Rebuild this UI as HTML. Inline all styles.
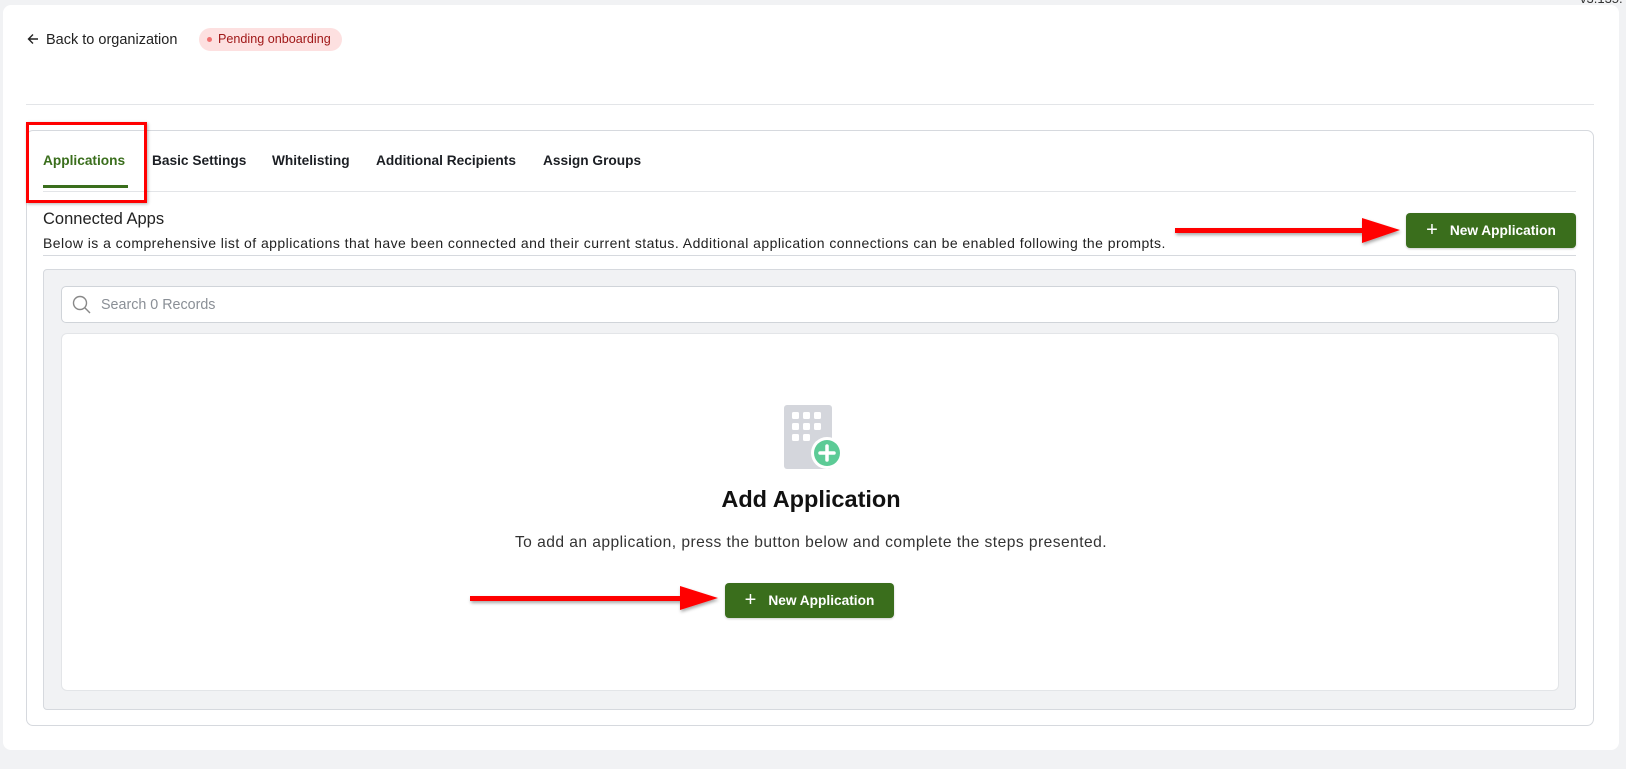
<!DOCTYPE html>
<html><head><meta charset="utf-8"><style>
*{box-sizing:border-box;margin:0;padding:0}
body{width:1626px;height:769px;background:#f1f2f4;font-family:"Liberation Sans",sans-serif;color:#1f2328;position:relative;overflow:hidden}
.abs{position:absolute}
.card{left:3px;top:5px;width:1616px;height:745px;background:#fff;border-radius:8px}
.inner{left:26px;top:130px;width:1568px;height:596px;border:1px solid #d6d9de;border-radius:7px;background:#fff}
.tab{top:153px;font-size:13.7px;font-weight:bold;color:#1c1f24}
.btn{background:#3a6e1c;color:#fff;border-radius:4px;font-size:13.7px;font-weight:bold;display:flex;align-items:center;justify-content:center;gap:12px;box-shadow:0 1px 2px rgba(0,0,0,.2)}
.btn span.p{font-size:20px;font-weight:normal;line-height:1;margin-top:-2px}
</style></head><body>
<div class="abs" style="left:1580px;top:-9px;font-size:13px;color:#333">v3.135.</div>
<div class="abs card"></div>
<svg class="abs" style="left:27px;top:33px" width="12" height="12" viewBox="0 0 12 12"><path d="M11 6H1.5M6 1.5L1.5 6 6 10.5" fill="none" stroke="#222" stroke-width="1.4"/></svg>
<div class="abs" style="left:46px;top:31px;font-size:14.5px;color:#222;line-height:18px">Back to organization</div>
<div class="abs" style="left:199px;top:28px;width:143px;height:23px;background:#fde0e0;border-radius:12px;font-size:12.6px;color:#a01818;line-height:23px;padding-left:19px">Pending onboarding<span class="abs" style="left:8px;top:9px;width:5px;height:5px;border-radius:50%;background:#f07070"></span></div>
<div class="abs" style="left:26px;top:104px;width:1568px;height:1px;background:#e3e5e8"></div>
<div class="abs inner"></div>
<div class="abs tab" style="left:43px;color:#3a6e1c">Applications</div>
<div class="abs tab" style="left:152px">Basic Settings</div>
<div class="abs tab" style="left:272px">Whitelisting</div>
<div class="abs tab" style="left:376px">Additional Recipients</div>
<div class="abs tab" style="left:543px">Assign Groups</div>
<div class="abs" style="left:43px;top:191px;width:1533px;height:1px;background:#e3e5e8"></div>
<div class="abs" style="left:43px;top:185px;width:85px;height:3px;background:#3a6e1c"></div>
<div class="abs" style="left:26px;top:122px;width:121px;height:81px;border:3px solid #f00;box-shadow:1px 1px 3px rgba(0,0,0,.3)"></div>
<div class="abs" style="left:43px;top:210px;font-size:16.5px;color:#222">Connected Apps</div>
<div class="abs" style="left:43px;top:235px;font-size:14px;letter-spacing:0.45px;color:#222;white-space:nowrap">Below is a comprehensive list of applications that have been connected and their current status. Additional application connections can be enabled following the prompts.</div>
<div class="abs" style="left:43px;top:255px;width:1533px;height:1px;background:#d6d9de"></div>
<div class="abs btn" style="left:1406px;top:213px;width:170px;height:35px"><span class="p">+</span>New Application</div>
<div class="abs" style="left:43px;top:269px;width:1533px;height:441px;background:#f1f2f4;border:1px solid #d6d9de;border-radius:4px"></div>
<div class="abs" style="left:61px;top:286px;width:1498px;height:37px;background:#fff;border:1px solid #d0d4d9;border-radius:5px"></div>
<svg class="abs" style="left:72px;top:295px" width="20" height="20" viewBox="0 0 20 20"><circle cx="8" cy="8" r="6.5" fill="none" stroke="#888" stroke-width="1.4"/><line x1="12.8" y1="12.8" x2="18" y2="18" stroke="#888" stroke-width="1.4"/></svg>
<div class="abs" style="left:101px;top:297px;font-size:14.3px;color:#8a8f96">Search 0 Records</div>
<div class="abs" style="left:61px;top:333px;width:1498px;height:358px;background:#fff;border:1px solid #e3e5e8;border-radius:6px"></div>
<svg class="abs" style="left:782px;top:403px" width="62" height="68" viewBox="0 0 62 68"><rect x="2" y="2" width="48" height="64" rx="3" fill="#d4d6dc"/><g fill="#fff"><rect x="10" y="9" width="7" height="7" rx="1.5"/><rect x="21" y="9" width="7" height="7" rx="1.5"/><rect x="32" y="9" width="7" height="7" rx="1.5"/><rect x="10" y="20" width="7" height="7" rx="1.5"/><rect x="21" y="20" width="7" height="7" rx="1.5"/><rect x="32" y="20" width="7" height="7" rx="1.5"/><rect x="10" y="31" width="7" height="7" rx="1.5"/><rect x="21" y="31" width="7" height="7" rx="1.5"/></g><circle cx="45" cy="50" r="16" fill="#fff"/><circle cx="45" cy="50" r="13" fill="#5ccb96"/><path d="M45 43v14M38 50h14" stroke="#fff" stroke-width="3.5" stroke-linecap="round"/></svg>
<div class="abs" style="left:0;width:1626px;top:486px;text-align:center;font-size:23.5px;font-weight:bold;color:#111">
<span style="position:relative;left:-2px">Add Application</span></div>
<div class="abs" style="left:0;width:1626px;top:534px;text-align:center;font-size:15.6px;letter-spacing:0.45px;color:#333"><span style="position:relative;left:-2px">To add an application, press the button below and complete the steps presented.</span></div>
<div class="abs btn" style="left:725px;top:583px;width:169px;height:35px"><span class="p">+</span>New Application</div>
<svg class="abs" style="left:0;top:0" width="1626" height="769"><defs><filter id="s"><feDropShadow dx="1" dy="2" stdDeviation="1.5" flood-opacity=".35"/></filter></defs>
<g fill="#f00" filter="url(#s)"><rect x="1175" y="228" width="190" height="5"/><polygon points="1362,218 1400,230 1362,243"/>
<rect x="470" y="596" width="213" height="5"/><polygon points="680,586 718,598 680,610"/></g></svg>
</body></html>
